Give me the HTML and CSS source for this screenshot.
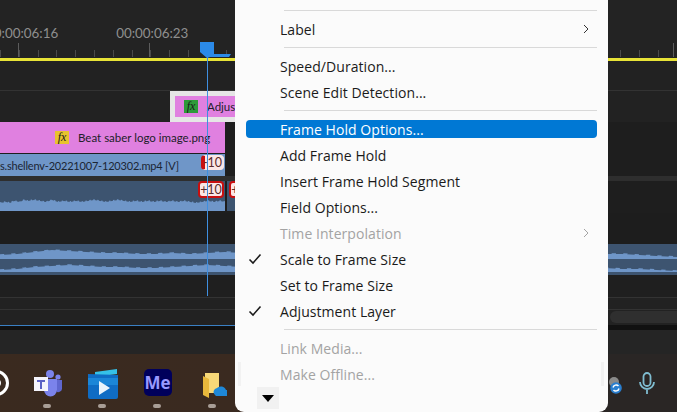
FILE: index.html
```html
<!DOCTYPE html>
<html lang="en">
<head>
    <meta charset="UTF-8">
    <title>Timeline context menu</title>
    <link rel="stylesheet" href="styles.css">
</head>
<body>

    <!-- Timeline -->
    <div class="timeline">
        <div class="ruler">
            <span class="time">00:00:06:16</span>
            <span class="time">00:00:06:23</span>
        </div>
        <div class="work-bar"></div>
        <div class="track track-empty"></div>

        <div class="track track-adjust">
            <div class="clip clip-adjust">
                <span class="fx fx-green">fx</span>
                <span>Adjustment Layer</span>
            </div>
        </div>

        <div class="track track-pink">
            <div class="clip clip-pink">
                <span class="fx fx-yellow">fx</span>
                <span>Beat saber logo image.png</span>
            </div>
        </div>

        <div class="track track-video">
            <div class="clip clip-video">
                <span>s.shellenv-20221007-120302.mp4 [V]</span>
            </div>
            <span class="badge badge-minus">-10</span>
        </div>

        <div class="track track-gap"></div>

        <div class="track track-audio">
            <div class="clip clip-audio">
                <svg class="wave" viewBox="0 0 225 30" preserveAspectRatio="none">
                    <polygon points="0,22 6,21 10,22 14,20 20,21 24,19 28,20 34,19 40,20 46,21 52,19 58,21 64,20 70,21 76,20 82,21 88,20 94,19 100,20 106,21 112,20 118,19 124,20 130,21 136,20 142,21 148,20 154,21 160,20 166,21 172,20 178,21 184,20 190,21 196,22 202,21 208,20 214,21 220,20 225,21 225,30 0,30" />
                    <polyline class="wave-comb" points="0,22 6,21 10,22 14,20 20,21 24,19 28,20 34,19 40,20 46,21 52,19 58,21 64,20 70,21 76,20 82,21 88,20 94,19 100,20 106,21 112,20 118,19 124,20 130,21 136,20 142,21 148,20 154,21 160,20 166,21 172,20 178,21 184,20 190,21 196,22 202,21 208,20 214,21 220,20 225,21" />
                </svg>
            </div>
            <div class="clip clip-audio-next"></div>
            <span class="badge badge-plus">+10</span>
            <span class="badge badge-next">+10</span>
        </div>

        <div class="track track-dark"></div>

        <div class="track track-audio-wide">
            <svg class="wave" viewBox="0 0 235 31" preserveAspectRatio="none">
                <polygon points="0,11 6,10 12,8 18,6 24,7 30,8 36,9 42,9 48,10 54,10 60,9 66,10 72,9 78,8 84,9 90,11 96,12 102,12 108,13 114,13 120,12 126,11 132,10 138,8 144,7 150,6 156,7 162,6 168,6 174,5 180,6 186,7 192,9 198,10 204,9 210,10 216,10 222,11 228,12 235,13 235,15 0,15" />
                <polyline class="wave-comb" points="0,11 6,10 12,8 18,6 24,7 30,8 36,9 42,9 48,10 54,10 60,9 66,10 72,9 78,8 84,9 90,11 96,12 102,12 108,13 114,13 120,12 126,11 132,10 138,8 144,7 150,6 156,7 162,6 168,6 174,5 180,6 186,7 192,9 198,10 204,9 210,10 216,10 222,11 228,12 235,13" />
                <polygon points="0,26 6,25 12,23 18,22 24,21 30,22 36,23 42,23 48,24 54,24 60,23 66,22 72,21 78,22 84,23 90,24 96,25 102,25 108,26 114,26 120,25 126,25 132,24 138,23 144,22 150,22 156,21 162,21 168,21 174,20 180,21 186,22 192,23 198,24 204,24 210,24 216,25 222,25 228,26 235,27 235,28 0,28" />
                <polyline class="wave-comb" points="0,26 6,25 12,23 18,22 24,21 30,22 36,23 42,23 48,24 54,24 60,23 66,22 72,21 78,22 84,23 90,24 96,25 102,25 108,26 114,26 120,25 126,25 132,24 138,23 144,22 150,22 156,21 162,21 168,21 174,20 180,21 186,22 192,23 198,24 204,24 210,24 216,25 222,25 228,26 235,27" />
            </svg>
        </div>

        <div class="track track-low-a"></div>
        <div class="track track-low-b"></div>
        <div class="track track-low-c"></div>
        <div class="track track-end"></div>

        <!-- Playhead -->
        <div class="playhead"></div>
        <svg class="playhead-head" viewBox="0 0 31 16">
            <polygon points="0,0 14,0 14,12 31,12 29,15 10,15 7,16 0,10" />
        </svg>
    </div>

    <!-- Taskbar -->
    <div class="taskbar">
        <div class="slot">
            <svg class="task-icon task-ring" viewBox="0 0 28 28">
                <circle cx="14" cy="14" r="11.5" fill="none" stroke="#fff" stroke-width="3" />
                <circle cx="14" cy="14" r="4" fill="none" stroke="#fff" stroke-width="2" />
            </svg>
        </div>
        <div class="slot">
            <svg class="task-icon" viewBox="0 0 28 28">
                <circle cx="24" cy="8" r="2.600" fill="#7b83eb" />
                <circle cx="16" cy="5" r="4" fill="#7b83eb" />
                <path d="M22 11h6v9a4 4 0 0 1-5 3z" fill="#5f67cf" />
                <path d="M10 10h13v11a6.500 6.500 0 0 1-13 0z" fill="#7b83eb" />
                <rect x="0" y="8" width="14" height="14" fill="#f4f4fc" />
                <path d="M3 11h8v2H8v7H6v-7H3z" fill="#5b62c5" />
            </svg>
            <span class="dot"></span>
        </div>
        <div class="slot">
            <svg class="task-icon task-films" viewBox="0 0 30 30">
                <path d="M7 3 29 0v5L7 8z" fill="#35c1e8" />
                <path d="M0 5 30 6v22a2 2 0 0 1-2 2H2a2 2 0 0 1-2-2z" fill="#0f6cc4" />
                <path d="M0 9h30v7H0z" fill="#1b86d8" />
                <path d="M11 12l11 7-11 7z" fill="#e8f3fb" />
            </svg>
            <span class="dot"></span>
        </div>
        <div class="slot">
            <div class="me-icon">Me</div>
            <span class="dot"></span>
        </div>
        <div class="slot">
            <svg class="task-icon task-folder" viewBox="1 0 24 27">
                <path d="M3 1h14v20H3z" fill="#f8d878" />
                <path d="M1 4l6 3v19l-6-3z" fill="#e8b83c" />
                <path d="M13 23a4 4 0 0 1 2-7 5.500 5.500 0 0 1 9 2 3 3 0 0 1 0 6H14z" fill="#1e88d8" />
            </svg>
            <span class="dot"></span>
        </div>
    </div>

    <!-- Right side of the desktop -->
    <div class="scroll-pill"></div>
    <div class="scroll-line"></div>
    <svg class="tray-sync" viewBox="0 0 13 17">
        <circle cx="5" cy="5" r="5" fill="#8a8a8a" />
        <circle cx="7" cy="11" r="5.800" fill="#2a7fd0" />
        <path d="M4 10.500a3.200 3.200 0 0 1 5.500-1.500M10 11.500a3.200 3.200 0 0 1-5.500 1.500" fill="none" stroke="#fff" stroke-width="1.400" />
    </svg>
    <svg class="tray-mic" viewBox="0 0 16 22">
        <rect x="4.500" y="1" width="7" height="13" rx="3.500" fill="none" stroke="#7fbcd0" stroke-width="1.800" />
        <path d="M1 10a7 7 0 0 0 14 0M8 17v5" fill="none" stroke="#7fbcd0" stroke-width="1.800" />
    </svg>

    <!-- Context menu -->
    <div class="menu">
        <div class="sep"></div>
        <div class="row"><div class="row-inner"><span class="mark"></span><span class="name">Label</span><svg class="arrow" viewBox="0 0 6 10"><path d="M1 1l4 4-4 4" /></svg></div></div>
        <div class="sep"></div>
        <div class="row"><div class="row-inner"><span class="mark"></span><span class="name">Speed/Duration...</span></div></div>
        <div class="row"><div class="row-inner"><span class="mark"></span><span class="name">Scene Edit Detection...</span></div></div>
        <div class="sep"></div>
        <div class="row active"><div class="row-inner"><span class="mark"></span><span class="name">Frame Hold Options...</span></div></div>
        <div class="row"><div class="row-inner"><span class="mark"></span><span class="name">Add Frame Hold</span></div></div>
        <div class="row"><div class="row-inner"><span class="mark"></span><span class="name">Insert Frame Hold Segment</span></div></div>
        <div class="row"><div class="row-inner"><span class="mark"></span><span class="name">Field Options...</span></div></div>
        <div class="row disabled"><div class="row-inner"><span class="mark"></span><span class="name">Time Interpolation</span><svg class="arrow" viewBox="0 0 6 10"><path d="M1 1l4 4-4 4" /></svg></div></div>
        <div class="row"><div class="row-inner"><span class="mark"><svg class="check" viewBox="0 0 14 12"><path d="M1.500 6.500 5 10l7.500-8.500" /></svg></span><span class="name">Scale to Frame Size</span></div></div>
        <div class="row"><div class="row-inner"><span class="mark"></span><span class="name">Set to Frame Size</span></div></div>
        <div class="row"><div class="row-inner"><span class="mark"><svg class="check" viewBox="0 0 14 12"><path d="M1.500 6.500 5 10l7.500-8.500" /></svg></span><span class="name">Adjustment Layer</span></div></div>
        <div class="sep"></div>
        <div class="row disabled"><div class="row-inner"><span class="mark"></span><span class="name">Link Media...</span></div></div>
        <div class="row disabled"><div class="row-inner"><span class="mark"></span><span class="name">Make Offline...</span></div></div>
        <div class="more"><span class="more-arrow"></span></div>
        <span class="edge edge-left"></span>
        <span class="edge edge-right"></span>
    </div>

</body>
</html>
```

FILE: styles.css
```css
/* Base */
body {
    margin: 0;
    width: 677px;
    height: 412px;
    position: relative;
    overflow: hidden;
    background-color: #252525;
    font-family: "Open Sans", sans-serif;
}

/* Timeline */
.timeline {
    position: relative;
    height: 354px;
    display: flex;
    flex-direction: column;
    background-color: #252525;
}

.ruler {
    height: 58px;
    flex: none;
    display: flex;
    gap: 58px;
    padding: 23px 0 0 0;
    box-sizing: border-box;
    background-color: #232323;
    background-image:
        repeating-linear-gradient(90deg, transparent 0 18px, #5c5c5c 18px 19px, transparent 19px 131px),
        repeating-linear-gradient(90deg, #4a4a4a 0 1px, transparent 1px 18.8px);
    background-size: 100% 14px, 100% 7px;
    background-position: 0 43px, 0 50px;
    background-repeat: no-repeat;
}

.time {
    font-family: Lato, sans-serif;
    font-size: 13.400px;
    line-height: 20px;
    color: #8f8f8f;
    white-space: nowrap;
}

.time:first-child {
    margin-left: -14px;
}

.work-bar {
    height: 3px;
    flex: none;
    background-color: #e8e337;
}

.track {
    position: relative;
    flex: none;
    overflow: hidden;
}

.track-empty {
    height: 30px;
    background-color: #222;
    border-bottom: 1px solid #333;
    box-sizing: border-box;
}

.track-adjust {
    height: 31px;
    background-color: #222;
}

.track-pink {
    height: 32px;
    background-color: #1e1e1e;
}

.track-video {
    height: 22px;
    background-color: #1e1e1e;
}

.track-gap {
    height: 5px;
    background-color: #2e2e2e;
}

.track-audio {
    height: 32px;
    background-color: #1e1e1e;
}

.track-dark {
    height: 31px;
    background-color: #1d1d1d;
}

.track-audio-wide {
    height: 31px;
    background-color: #3d5470;
}

.track-low-a {
    height: 23px;
    background-color: #1f1f1f;
    border-bottom: 1px solid #333;
    box-sizing: border-box;
}

.track-low-b {
    height: 12px;
    background-color: #222;
    border-bottom: 1px solid #333;
    box-sizing: border-box;
}

.track-low-c {
    height: 15px;
    background-color: #222;
}

.track-end {
    height: 29px;
    border-top: 1px solid #3a80c4;
    box-sizing: border-box;
    background: linear-gradient(#111 0 4px, #252525 4px);
}

/* Clips */
.clip {
    position: absolute;
    top: 0;
    box-sizing: border-box;
    display: flex;
    align-items: center;
    white-space: nowrap;
    font-family: Lato, sans-serif;
    font-size: 11.500px;
    overflow: hidden;
}

.clip-adjust {
    left: 170px;
    width: 80px;
    height: 31px;
    background-color: #e080e0;
    border: 5px solid #e6e6e6;
    border-right: 0;
    color: #22202a;
    padding-left: 9px;
    gap: 9px;
}

.clip-pink {
    left: 0;
    width: 225px;
    height: 31px;
    background-color: #e080e0;
    color: #22202a;
    padding-left: 55px;
    gap: 9px;
}

.clip-video {
    left: 0;
    width: 225px;
    height: 22px;
    background-color: #6f96c8;
    color: #1b2533;
    font-size: 11px;
    letter-spacing: -0.2px;
}

.clip-audio {
    left: 0;
    width: 225px;
    height: 30px;
    background-color: #3d5470;
}

.clip-audio-next {
    left: 227px;
    width: 10px;
    height: 30px;
    background-color: #3d5470;
}

.wave {
    display: block;
    width: 100%;
    height: 100%;
    fill: #6f96c8;
}

.wave-comb {
    fill: none;
    stroke: #6f96c8;
    stroke-width: 1.500;
    stroke-dasharray: 1.500 2.500;
}

.fx {
    width: 14px;
    height: 13px;
    flex: none;
    font-family: "Liberation Serif", serif;
    font-style: italic;
    font-size: 12px;
    line-height: 13px;
    text-align: center;
    color: #1a1a1a;
}

.fx-green {
    background-color: #2e9a3a;
}

.fx-yellow {
    background-color: #e8c32e;
}

.badge {
    position: absolute;
    box-sizing: border-box;
    font-family: Lato, sans-serif;
    font-size: 12.500px;
    text-align: center;
    color: #5a2a2a;
    background-color: #fbe6e6;
    border: 2px solid #c80f0f;
    border-radius: 4px;
}

.badge-minus {
    left: 201px;
    top: 1px;
    width: 23px;
    height: 15px;
    line-height: 14px;
    text-indent: -3px;
    border-width: 1px 1px 1px 4px;
    border-color: #fbe6e6 #fbe6e6 #fbe6e6 #c80f0f;
}

.badge-plus {
    left: 198px;
    top: 0;
    width: 26px;
    height: 17px;
    line-height: 13px;
}

.badge-next {
    left: 229px;
    top: 0;
    width: 26px;
    height: 17px;
    line-height: 13px;
}

/* Playhead */
.playhead {
    position: absolute;
    left: 207px;
    top: 56px;
    width: 1px;
    height: 240px;
    background-color: #3f8fe0;
}

.playhead-head {
    position: absolute;
    left: 200px;
    top: 42px;
    width: 31px;
    height: 16px;
    fill: #2b8ae8;
}

/* Taskbar */
.taskbar {
    height: 58px;
    display: flex;
    margin-left: -35px;
    background: linear-gradient(90deg, #3a2a1f 0, #3a2a20 275px, #2a2625 645px);
}

.slot {
    width: 55px;
    flex: none;
    position: relative;
    display: flex;
    justify-content: center;
    padding-top: 15px;
    box-sizing: border-box;
}

.task-icon {
    width: 28px;
    height: 28px;
}

.task-ring {
    margin-left: 6px;
}

.task-films {
    width: 30px;
    height: 30px;
}

.task-folder {
    width: 24px;
    height: 27px;
    margin: 3px 0 0 4px;
}

.me-icon {
    width: 28px;
    height: 27px;
    border-radius: 5px;
    background-color: #00005b;
    color: #9999ff;
    font-weight: 700;
    font-size: 17px;
    line-height: 27px;
    text-align: center;
}

.dot {
    position: absolute;
    left: 23px;
    bottom: 4px;
    width: 8px;
    height: 4px;
    border-radius: 2px;
    background-color: #a89e96;
}

/* Right side */
.scroll-pill {
    position: absolute;
    left: 610px;
    top: 311px;
    width: 80px;
    height: 12px;
    border-radius: 6px;
    background-color: #2f2f2f;
}

.scroll-line {
    position: absolute;
    left: 608px;
    right: 0;
    top: 325px;
    height: 3px;
    background-color: #111;
}

.tray-sync {
    position: absolute;
    left: 609px;
    top: 377px;
    width: 13px;
    height: 17px;
}

.tray-mic {
    position: absolute;
    left: 639px;
    top: 372px;
    width: 16px;
    height: 22px;
}

/* Context menu */
.menu {
    position: absolute;
    left: 235px;
    top: 0;
    width: 373px;
    height: 412px;
    box-sizing: border-box;
    padding: 5px 11px 0;
    background-color: #fbfbfb;
    border-radius: 0 0 9px 9px;
    font-size: 14px;
    letter-spacing: 0.06px;
    color: #1a1a1a;
}

.sep {
    height: 11px;
    display: flex;
    align-items: center;
    margin-left: 38px;
}

.sep::before {
    content: "";
    flex: 1;
    height: 1px;
    background-color: #d9d9d9;
}

.row {
    height: 26px;
    padding: 4px 0;
    box-sizing: border-box;
}

.row-inner {
    height: 18px;
    display: flex;
    align-items: center;
    border-radius: 4px;
    line-height: 20px;
}

.mark {
    width: 34px;
    flex: none;
    display: flex;
    padding-left: 2px;
    box-sizing: border-box;
}

.name {
    flex: 1;
    white-space: nowrap;
    padding-top: 2px;
}

.arrow {
    width: 6px;
    height: 10px;
    flex: none;
    margin-right: 8px;
    fill: none;
    stroke: #333;
    stroke-width: 1;
}

.check {
    width: 14px;
    height: 12px;
    fill: none;
    stroke: #1a1a1a;
    stroke-width: 1.600;
}

.active .row-inner {
    background-color: #0078d4;
    color: #fff;
}

.disabled .name {
    color: #a3a3a3;
}

.disabled .arrow {
    stroke: #a3a3a3;
}

.more {
    position: absolute;
    left: 22px;
    top: 387px;
    width: 22px;
    height: 22px;
    display: flex;
    align-items: center;
    justify-content: center;
    background-color: #f1f1f1;
}

.more-arrow {
    width: 0;
    height: 0;
    border-left: 6.500px solid transparent;
    border-right: 6.500px solid transparent;
    border-top: 7px solid #000;
}

.edge {
    position: absolute;
    top: 362px;
    width: 3px;
    height: 24px;
    background-color: #f2f2f2;
}

.edge-left {
    left: 3px;
}

.edge-right {
    right: 4px;
}
```
